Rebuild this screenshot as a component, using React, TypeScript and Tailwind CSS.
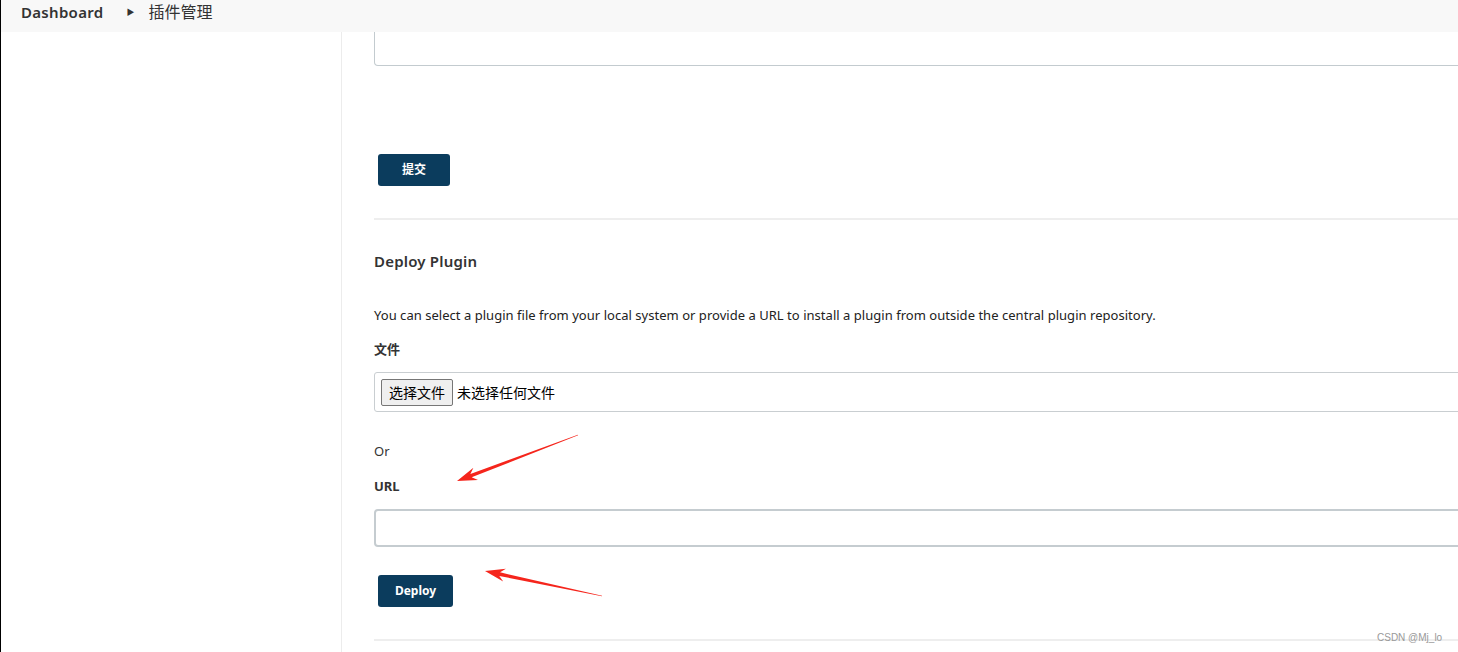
import React from "react";

function arrowPoints(tx: number, ty: number, hx: number, hy: number) {
  const dx = hx - tx;
  const dy = hy - ty;
  const len = Math.hypot(dx, dy);
  const ux = dx / len;
  const uy = dy / len;
  const nx = -uy;
  const ny = ux;
  const headLen = 20;
  const headW = 6.5;
  const bx = hx - headLen * ux;
  const by = hy - headLen * uy;
  const nbx = hx - (headLen - 5) * ux;
  const nby = hy - (headLen - 5) * uy;
  const pts: [number, number][] = [
    [tx + 0.3 * nx, ty + 0.3 * ny],
    [nbx + 1.8 * nx, nby + 1.8 * ny],
    [bx + headW * nx, by + headW * ny],
    [hx, hy],
    [bx - headW * nx, by - headW * ny],
    [nbx - 1.8 * nx, nby - 1.8 * ny],
    [tx - 0.3 * nx, ty - 0.3 * ny],
  ];
  return pts.map((p) => p.join(",")).join(" ");
}

export default function App() {
  const font = { fontFamily: '"Noto Sans", "Noto Sans CJK SC", sans-serif' };
  return (
    <div
      className="relative w-[1458px] h-[652px] overflow-hidden bg-white text-[#333]"
      style={font}
    >
      <div className="flex h-full border-l border-black">
        <div className="flex flex-col w-full">
          {/* header */}
          <div className="h-[32px] shrink-0 bg-[#f8f8f8] flex items-start pt-[1px] pl-[20px]">
            <span className="text-[15px] leading-[22px] font-semibold tracking-[0.3px] text-[#333]">Dashboard</span>
            <span className="ml-[23px] mr-[14px] text-[8px] leading-[22px] text-[#333]">▶</span>
            <span className="text-[16px] leading-[22px] text-[#333]">插件管理</span>
          </div>
          <div className="flex flex-1 min-h-0">
            {/* sidebar */}
            <div className="w-[341px] shrink-0 border-r border-[#ececec]" />
            {/* main */}
            <div className="pl-[32px] w-[1200px] shrink-0 flex flex-col">
              <div className="h-[34px] border-x border-b border-[#c3cbcf] rounded-b-[4px]" />
              <div className="mt-[88px] ml-[4px]">
                <button className="w-[72px] h-[32px] rounded-[3px] bg-[#0b3c5d] text-white text-[12px] font-bold">
                  提交
                </button>
              </div>
              <div className="mt-[32px] h-[2px] bg-[#eeeeee]" />
              <div className="mt-[31px] text-[15px] font-semibold leading-[20px] tracking-[0.2px]">
                Deploy Plugin
              </div>
              <div className="mt-[35px] text-[13px] leading-[18px] tracking-[0.03px] text-[#222]">
                You can select a plugin file from your local system or provide a URL to install a plugin from outside the central plugin repository.
              </div>
              <div className="mt-[16px] text-[13px] font-bold leading-[18px]">文件</div>
              <div className="mt-[14px] h-[40px] border border-[#c9ced1] rounded-[3px] flex items-center pl-[6px]">
                <span className="h-[27px] px-[7px] flex items-center border border-[#767676] rounded-[2px] bg-[#efefef] text-[14px] text-black">
                  选择文件
                </span>
                <span className="ml-[4px] text-[14px] text-black">未选择任何文件</span>
              </div>
              <div className="mt-[30px] text-[13px] leading-[18px]">Or</div>
              <div className="mt-[17px] text-[13px] font-bold leading-[18px]">URL</div>
              <div className="mt-[14px] h-[38px] border-2 border-[#c5ccd0] rounded-[4px]" />
              <div className="mt-[28px] ml-[4px]">
                <button className="w-[75px] h-[32px] rounded-[3px] bg-[#0b3c5d] text-white text-[12px] font-bold">
                  Deploy
                </button>
              </div>
              <div className="mt-[32px] h-[2px] bg-[#eeeeee]" />
            </div>
          </div>
        </div>
      </div>

      <svg
        className="absolute inset-0 pointer-events-none"
        width="1458"
        height="652"
        viewBox="0 0 1458 652"
      >
        <polygon points={arrowPoints(578, 435, 457, 481)} fill="#f5251c" />
        <polygon points={arrowPoints(602, 596, 485, 571)} fill="#f5251c" />
      </svg>

      <div
        className="absolute left-[1377px] top-[630px] text-[10px] text-[#999]"
        style={{ fontFamily: '"Liberation Sans", Arial, sans-serif' }}
      >
        CSDN @Mj_lo
      </div>
    </div>
  );
}
